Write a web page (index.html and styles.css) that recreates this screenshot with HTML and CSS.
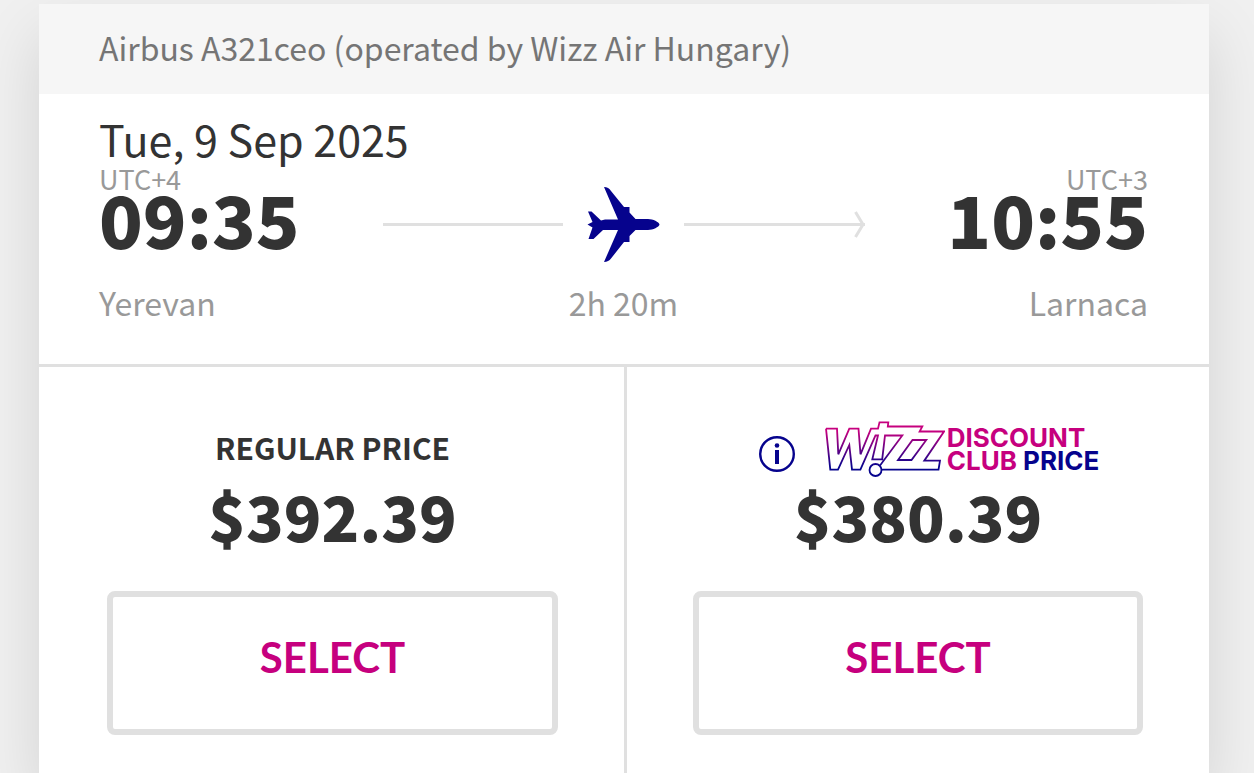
FILE: index.html
```
<!DOCTYPE html>
<html lang="en">
<head>
<meta charset="utf-8">
<title>Yerevan - Larnaca</title>
<link rel="stylesheet" href="styles.css">
</head>
<body>
<div class="card">
  <div class="aircraft">Airbus A321ceo (operated by Wizz Air Hungary)</div>
  <div class="flight">
    <div class="date">Tue, 9 Sep 2025</div>
    <div class="legs">
      <div class="stop">
        <div class="utc">UTC+4</div>
        <div class="time">09:35</div>
        <div class="city">Yerevan</div>
      </div>
      <div class="middle">
        <div class="route">
          <span class="line"></span>
          <svg class="plane" width="75" height="77" viewBox="0 0 75 77">
            <path d="M18 1C21 1 23.500 2.500 25 5L38 21H43.500V26.500L49.500 33H62C67 33 73 36 73.500 38.500C73 41 67 44 62 44H49.500L43.500 50V56H38L25 72.500C23.500 74.500 21 76 18 76L32 44H17L7.500 53H2.500L6.500 41.500L1.500 38.500L6.500 36L2 25.500H5.500L15 34.500L19 33.500H32Z"/>
          </svg>
          <span class="line">
            <svg class="head" width="11" height="27" viewBox="0 0 11 27"><path d="M1.500 1L9 13.500L1.500 26"/></svg>
          </span>
        </div>
        <div class="duration">2h 20m</div>
      </div>
      <div class="stop right">
        <div class="utc">UTC+3</div>
        <div class="time">10:55</div>
        <div class="city">Larnaca</div>
      </div>
    </div>
  </div>
  <div class="fares">
    <div class="fare">
      <div class="label">REGULAR PRICE</div>
      <div class="price">$392.39</div>
      <button type="button" class="select">SELECT</button>
    </div>
    <div class="fare">
      <div class="label club">
        <svg class="info" width="36" height="36" viewBox="0 0 36 36">
          <circle class="ring" cx="18" cy="18" r="16.800"/>
          <circle cx="18" cy="9.500" r="2.300"/>
          <rect x="16" y="14" width="4" height="14"/>
        </svg>
        <svg class="wizz" width="120" height="56" viewBox="0 0 120 56">
          <defs>
            <linearGradient id="wizz-fill" gradientUnits="userSpaceOnUse" x1="0" y1="10" x2="0" y2="46">
              <stop offset="0" stop-color="#c6007e"/>
              <stop offset="1" stop-color="#06038d"/>
            </linearGradient>
          </defs>
          <path d="M1 7.700H12L13.300 33.300L24.300 7.700H33.500L35.500 33.300L46 7.700H53L54.500 1.300H63.300L62.800 5.500H97.300L94.600 10.500H119L99.300 39.700H115L113.500 48.700H56.700"/>
          <path d="M1 7.700L5.300 48.700H13L24.300 24L27 48.700H35.400L50.500 14.500H53L47.300 38.300H57.200L60 14.500H77.300L55 44.500"/>
          <path d="M87.500 19H101.300L86.500 39H73Z"/>
          <circle cx="50.500" cy="49" r="6"/>
        </svg>
        <span class="club-name">DISCOUNT<br>CLUB <b>PRICE</b></span>
      </div>
      <div class="price">$380.39</div>
      <button type="button" class="select">SELECT</button>
    </div>
  </div>
</div>
</body>
</html>
```
FILE: styles.css
```
body
{
    margin: 0;
    padding: 4px 45px 0 39px;
    background: #f0f0f0;
    font-family: "Noto Sans CJK SC", sans-serif;
    color: #333;
}

.card
{
    background: #fff;
    box-shadow: 0 30px 60px rgba(0, 0, 0, 0.12);
}

.aircraft
{
    padding: 21px 60px 25px;
    background: #f6f6f6;
    font-size: 32px;
    line-height: 44px;
    color: #757575;
}

.flight
{
    padding: 22px 61px 40px 60px;
    border-bottom: 3px solid #e0e0e0;
}

.date
{
    font-size: 43px;
    line-height: 44px;
}

.legs
{
    display: grid;
    grid-template-columns: 1fr 482px 1fr;
    align-items: end;
}

.stop.right
{
    text-align: right;
}

.utc
{
    font-size: 27px;
    line-height: 38px;
    color: #999;
}

.time
{
    margin-bottom: 42px;
    font-size: 72px;
    line-height: 40px;
    font-weight: 900;
}

.city, .duration
{
    font-size: 32px;
    line-height: 44px;
    color: #999;
}

.middle
{
    text-align: center;
}

.route
{
    display: flex;
    align-items: center;
    gap: 23px;
    margin-bottom: 17px;
}

.line
{
    position: relative;
    flex: 1;
    height: 3px;
    background: #e0e0e0;
}

.head
{
    position: absolute;
    top: -12px;
    right: 0;
    fill: none;
    stroke: #e0e0e0;
    stroke-width: 3;
}

.plane
{
    fill: #06038d;
}

.fares
{
    display: grid;
    grid-template-columns: calc(50% + 3px) 1fr;
}

.fare
{
    padding: 54px 66px 38px;
    text-align: center;
}

.fare:first-child
{
    border-right: 3px solid #e0e0e0;
    padding-left: 68px;
}

.label
{
    display: flex;
    align-items: center;
    justify-content: center;
    height: 52px;
    padding-bottom: 4px;
    margin-bottom: 6px;
    font-size: 30px;
    font-weight: bold;
}

.club
{
    height: 56px;
    padding: 0 0 0 22px;
}

.info
{
    margin: 10px 30px 0 0;
    fill: #06038d;
}

.ring
{
    fill: none;
    stroke: #06038d;
    stroke-width: 2.4;
}

.wizz
{
    fill: none;
    stroke: url(#wizz-fill);
    stroke-width: 1.8;
}

.wizz circle
{
    fill: #fff;
}

.club-name
{
    margin-left: 2px;
    font-family: Inter, sans-serif;
    font-size: 26px;
    line-height: 23px;
    text-align: left;
    white-space: nowrap;
    color: #c6007e;
}

.club-name b
{
    font-weight: bold;
    color: #06038d;
}

.price
{
    margin-bottom: 44px;
    font-size: 62px;
    line-height: 64px;
    font-weight: 900;
}

.select
{
    display: block;
    width: 100%;
    height: 144px;
    padding: 0 0 12px;
    border: 6px solid #e0e0e0;
    border-radius: 8px;
    background: #fff;
    font-family: Lato, sans-serif;
    font-size: 42px;
    font-weight: bold;
    color: #c6007e;
}
```
